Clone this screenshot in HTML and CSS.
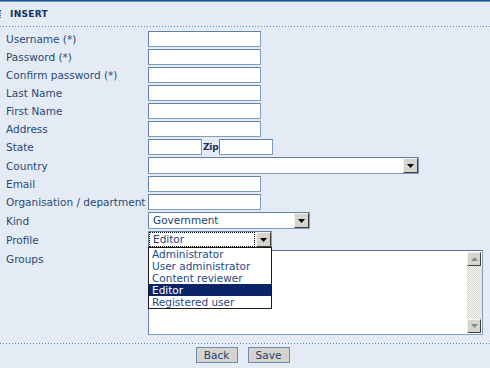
FILE: index.html
```html
<!DOCTYPE html>
<html lang="en">
<head>
  <meta charset="UTF-8" />
  <title>Insert user</title>
  <link rel="stylesheet" href="styles.css">
</head>
<body>
  <div class="panel">
    <div class="panel-head"><span class="grip"></span>INSERT</div>
    <div class="dots"></div>

    <table class="form">
      <tr><td class="lbl">Username (*)</td><td><input class="txt" type="text" /></td></tr>
      <tr><td class="lbl">Password (*)</td><td><input class="txt" type="password" /></td></tr>
      <tr><td class="lbl">Confirm password (*)</td><td><input class="txt" type="password" /></td></tr>
      <tr><td class="lbl">Last Name</td><td><input class="txt" type="text" /></td></tr>
      <tr><td class="lbl">First Name</td><td><input class="txt" type="text" /></td></tr>
      <tr><td class="lbl">Address</td><td><input class="txt" type="text" /></td></tr>
      <tr>
        <td class="lbl">State</td>
        <td class="pair"><input class="txt short" type="text" /><b class="zip">Zip</b><input class="txt short" type="text" /></td>
      </tr>
      <tr>
        <td class="lbl">Country</td>
        <td>
          <div class="sel sel-country">
            <span class="val"></span>
            <span class="arr"><svg width="7" height="4" viewBox="0 0 7 4"><polygon points="0,0 7,0 3.5,4" fill="#000"/></svg></span>
          </div>
        </td>
      </tr>
      <tr><td class="lbl">Email</td><td><input class="txt" type="text" /></td></tr>
      <tr><td class="lbl">Organisation / department</td><td><input class="txt" type="text" /></td></tr>
      <tr>
        <td class="lbl">Kind</td>
        <td>
          <div class="sel sel-kind">
            <span class="val">Government</span>
            <span class="arr"><svg width="7" height="4" viewBox="0 0 7 4"><polygon points="0,0 7,0 3.5,4" fill="#000"/></svg></span>
          </div>
        </td>
      </tr>
      <tr>
        <td class="lbl">Profile</td>
        <td>
          <div class="sel sel-profile">
            <span class="val focus">Editor</span>
            <span class="arr"><svg width="7" height="4" viewBox="0 0 7 4"><polygon points="0,0 7,0 3.5,4" fill="#000"/></svg></span>
            <ul class="opts">
              <li>Administrator</li>
              <li>User administrator</li>
              <li>Content reviewer</li>
              <li class="on">Editor</li>
              <li>Registered user</li>
            </ul>
          </div>
        </td>
      </tr>
      <tr>
        <td class="lbl top">Groups</td>
        <td>
          <div class="listbox">
            <div class="items"></div>
            <div class="scroll">
              <span class="sbtn"><svg width="7" height="4" viewBox="0 0 7 4"><polygon points="3.5,0 7,4 0,4" fill="#8a8a8a"/></svg></span>
              <span class="track"></span>
              <span class="sbtn"><svg width="7" height="4" viewBox="0 0 7 4"><polygon points="0,0 7,0 3.5,4" fill="#8a8a8a"/></svg></span>
            </div>
          </div>
        </td>
      </tr>
    </table>

    <div class="dots bottom"></div>
    <div class="actions">
      <button type="button">Back</button>
      <button type="button">Save</button>
    </div>
  </div>
</body>
</html>
```

FILE: styles.css
```css
* {
  box-sizing: border-box;
}

body {
  margin: 0;
  background: #e5ebf4;
  font-family: "DejaVu Sans", Verdana, sans-serif;
  font-size: 10.5px;
  color: #264a78;
}

.panel {
  border-top: 1px solid #1c4f8e;
  box-shadow: inset 0 1px 0 #6f93c2;
  height: 368px;
}

.panel-head {
  height: 25px;
  display: flex;
  align-items: center;
  font-size: 9px;
  font-weight: bold;
  color: #14305c;
  letter-spacing: 0.3px;
}

.grip {
  display: inline-block;
  width: 1px;
  height: 8px;
  border-left: 1px dotted #3d6aa3;
  margin-right: 9px;
}

.dots {
  height: 1px;
  background: repeating-linear-gradient(to right, #5a86bb 0 1px, transparent 1px 3px);
}

.dots.bottom {
  margin-top: 7px;
}

.form {
  border-collapse: collapse;
  margin: 3px 0 0 6px;
}

.form td {
  padding: 1px 0;
  vertical-align: middle;
  white-space: nowrap;
}

.form .lbl {
  width: 142px;
}

.form .lbl.top {
  vertical-align: top;
  padding-top: 4px;
}

.txt {
  display: block;
  width: 113px;
  height: 16px;
  margin: 0;
  padding: 0 2px;
  border: 1px solid #7f9dbf;
  border-top-color: #5f80aa;
  border-left-color: #5f80aa;
  background: #fff;
  font: 10.5px "DejaVu Sans", Verdana, sans-serif;
}

.pair {
  display: flex;
  align-items: center;
}

.txt.short {
  width: 54px;
}

.zip {
  font-size: 9px;
  color: #14305c;
  letter-spacing: -0.2px;
  margin: 0 1px;
}

.sel {
  position: relative;
  display: flex;
  align-items: center;
  height: 17px;
  border: 1px solid #7f9dbf;
  border-top-color: #5f80aa;
  border-left-color: #5f80aa;
  background: #fff;
  color: #1d3f73;
}

.sel-country { width: 271px; }
.sel-kind { width: 162px; }
.sel-profile { width: 124px; }

.val {
  flex: 1;
  height: 13px;
  line-height: 13px;
  padding-left: 3px;
  margin: 0 2px 0 1px;
}

.val.focus {
  outline: 1px dotted #000;
}

.arr,
.sbtn {
  width: 15px;
  height: 15px;
  display: flex;
  align-items: center;
  justify-content: center;
  background: #d7d4ce;
  border: 1px solid;
  border-color: #f4f3ef #404040 #404040 #f4f3ef;
}

.opts {
  position: absolute;
  z-index: 2;
  top: 15px;
  left: -1px;
  width: 124px;
  margin: 0;
  padding: 0;
  list-style: none;
  background: #fff;
  border: 1px solid #1a1a1a;
  line-height: 12px;
  color: #1f4a86;
}

.opts li {
  padding-left: 3px;
}

.opts li.on {
  background: #0a246a;
  color: #fff;
}

.listbox {
  display: flex;
  width: 335px;
  height: 85px;
  border: 1px solid #7f9dbf;
  border-top-color: #4f74a3;
  border-left-color: #6385b0;
  background: #fff;
}

.listbox .items {
  flex: 1;
}

.scroll {
  width: 15px;
  display: flex;
  flex-direction: column;
  padding: 1px 0;
}

.scroll .sbtn {
  width: 14px;
  height: 14px;
}

.track {
  flex: 1;
  background: repeating-conic-gradient(#d9d6cf 0 25%, #f7f6f2 0 50%) 0 0 / 2px 2px;
}

.actions {
  display: flex;
  justify-content: center;
  gap: 10px;
  margin-top: 3px;
  padding-right: 5px;
}

.actions button {
  height: 16px;
  width: 42px;
  padding: 0;
  border: 1px solid #6b8cb5;
  background: #d6d3cc;
  color: #1d3f73;
  font: 10.5px "DejaVu Sans", Verdana, sans-serif;
  line-height: 13px;
  cursor: pointer;
}
```
